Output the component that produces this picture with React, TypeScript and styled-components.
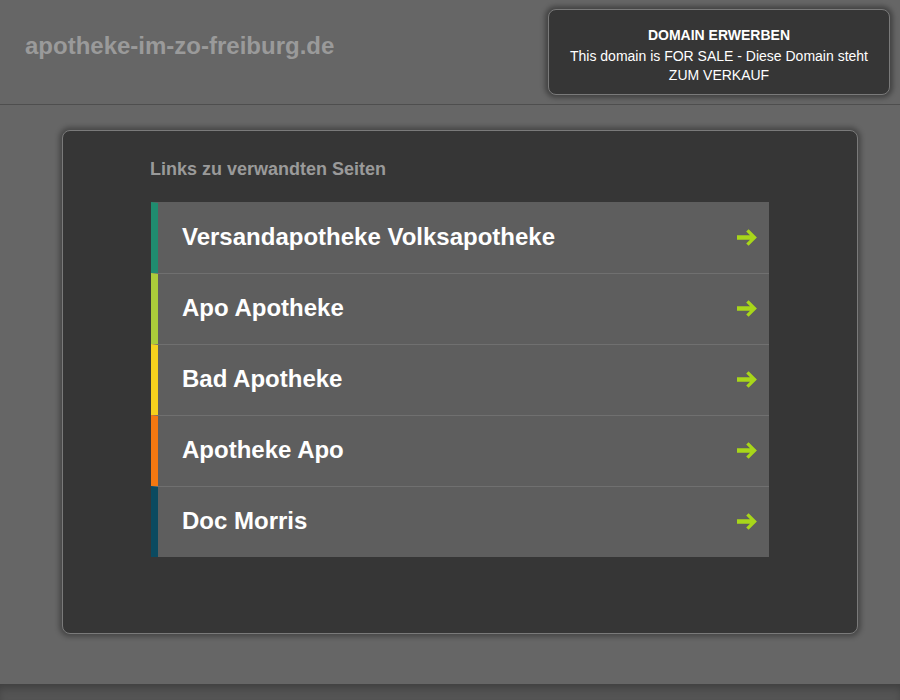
import React from "react";
import styled, { createGlobalStyle } from "styled-components";

const Global = createGlobalStyle`
  html, body { margin: 0; padding: 0; background: #666666; }
  body { font-family: "Liberation Sans", Arial, sans-serif; }
`;

const Page = styled.div`
  width: 900px;
  height: 700px;
  display: flex;
  flex-direction: column;
  overflow: hidden;
  background: #666666;
`;

const Header = styled.header`
  height: 105px;
  box-sizing: border-box;
  border-bottom: 1px solid #4e4e4e;
  display: flex;
  justify-content: space-between;
  align-items: flex-start;
  padding: 9px 10px 0 25px;
  flex-shrink: 0;
`;

const SiteTitle = styled.h1`
  margin: 23px 0 0;
  font-size: 24px;
  line-height: 28px;
  font-weight: bold;
  color: #9a9a9a;
`;

const SaleBox = styled.div`
  width: 342px;
  height: 86px;
  box-sizing: border-box;
  background: #363636;
  border: 1px solid #7a7a7a;
  border-radius: 8px;
  box-shadow: 0 0 5px 3px rgba(0, 0, 0, 0.35);
  color: #ffffff;
  text-align: center;
  padding: 16px 10px 0;
  font-size: 14px;
  line-height: 19px;
`;

const SaleTitle = styled.div`
  font-weight: bold;
  margin-bottom: 2px;
`;

const Main = styled.main`
  flex: 1;
  padding: 25px 42px 0 62px;
`;

const Card = styled.section`
  width: 796px;
  height: 504px;
  box-sizing: border-box;
  background: #363636;
  border: 1px solid #7a7a7a;
  border-radius: 8px;
  box-shadow: 0 0 5px 3px rgba(0, 0, 0, 0.3);
  padding: 28px 88px 0 87px;
`;

const Heading = styled.h2`
  margin: 0 0 23px;
  font-size: 18px;
  font-weight: bold;
  color: #9a9a9a;
  line-height: 20px;
`;

const List = styled.ul`
  list-style: none;
  margin: 0;
  padding: 0 0 0 1px;
  width: 618px;
`;

const Row = styled.li<{ $accent: string; $first?: boolean }>`
  height: 71px;
  box-sizing: border-box;
  background: #5e5e5e;
  border-left: 7px solid ${(p) => p.$accent};
  border-top: 1px solid ${(p) => (p.$first ? "#5e5e5e" : "#707070")};
  display: flex;
  align-items: center;
  justify-content: space-between;
  padding: 0 11px 2px 24px;
`;

const RowLabel = styled.span`
  color: #ffffff;
  font-size: 24px;
  font-weight: bold;
`;

const Footer = styled.footer`
  height: 16px;
  flex-shrink: 0;
  background: #545454;
  box-shadow: inset 0 6px 8px -2px rgba(0, 0, 0, 0.25);
`;

const Arrow = () => (
  <svg width="21" height="17" viewBox="0 0 21 17" aria-hidden="true">
    <path
      d="M0 6.3 H13 L9.2 2.5 L11.6 0.2 L19.9 8.5 L11.6 16.8 L9.2 14.5 L13 10.7 H0 Z"
      fill="#a8d61a"
    />
  </svg>
);

const links = [
  { label: "Versandapotheke Volksapotheke", color: "#1f8c6f" },
  { label: "Apo Apotheke", color: "#abcc3a" },
  { label: "Bad Apotheke", color: "#f5d11d" },
  { label: "Apotheke Apo", color: "#f47811" },
  { label: "Doc Morris", color: "#0b4a60" },
];

export default function App() {
  return (
    <Page>
      <Global />
      <Header>
        <SiteTitle>apotheke-im-zo-freiburg.de</SiteTitle>
        <SaleBox>
          <SaleTitle>DOMAIN ERWERBEN</SaleTitle>
          <div>This domain is FOR SALE - Diese Domain steht ZUM VERKAUF</div>
        </SaleBox>
      </Header>
      <Main>
        <Card>
          <Heading>Links zu verwandten Seiten</Heading>
          <List>
            {links.map((l, i) => (
              <Row key={l.label} $accent={l.color} $first={i === 0}>
                <RowLabel>{l.label}</RowLabel>
                <Arrow />
              </Row>
            ))}
          </List>
        </Card>
      </Main>
      <Footer />
    </Page>
  );
}
